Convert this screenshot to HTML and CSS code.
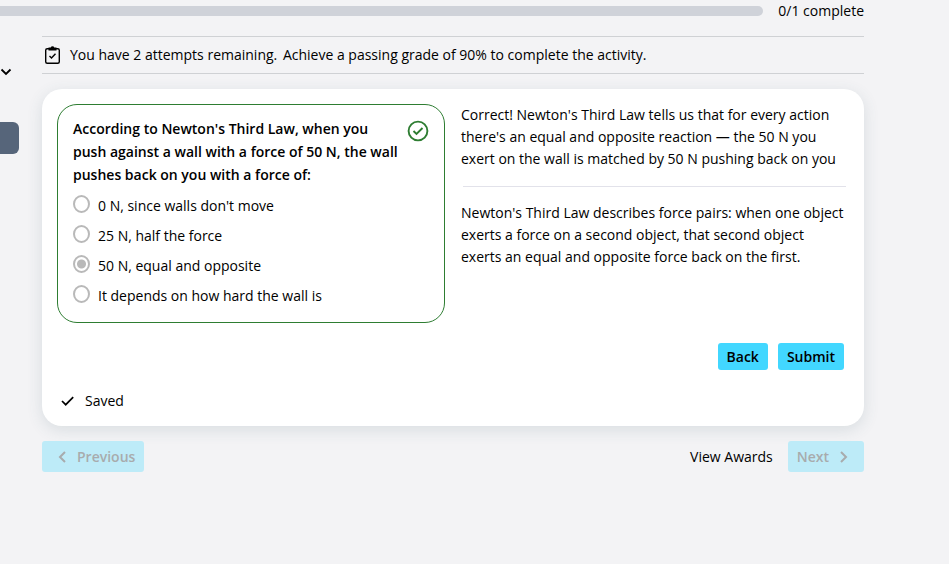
FILE: index.html
```html
<!DOCTYPE html>
<html lang="en">
<head>
    <meta charset="UTF-8">
    <title>Newton's Third Law</title>
    <meta name="viewport" content="width=device-width, initial-scale=1">
    <link rel="stylesheet" href="styles.css">
</head>
<body>

<header class="progress-row">
    <div class="progress-bar" role="progressbar" aria-label="Lesson progress" aria-valuenow="0" aria-valuemin="0" aria-valuemax="1"></div>
    <span>0/1 complete</span>
</header>

<div class="layout">
    <!-- Collapsed lesson menu -->
    <nav class="sidebar" aria-label="Lesson menu">
        <button type="button" class="menu-toggle" aria-label="Toggle menu">
            <svg width="12" height="8" viewBox="0 0 12 8" fill="none" stroke="currentColor" stroke-width="1.8"><path d="M1.5 1.5L6 6l4.500-4.500"/></svg>
        </button>
        <a href="#question" class="menu-item" aria-label="Current activity"></a>
    </nav>

    <main class="content">
        <div class="notice">
            <svg width="17" height="18" viewBox="0 0 17 18" fill="none" stroke="currentColor">
                <rect x="1.7" y="2.7" width="13.6" height="14.5" rx="1.5" stroke-width="1.4"/>
                <path d="M4.500 1.500h2.200a1.900 1.900 0 0 1 3.600 0H12.500V4.500H4.500z" fill="currentColor" stroke="none"/>
                <path d="M5.500 10l2 2 4-4.300" stroke-width="1.4"/>
            </svg>
            <p><span class="attempts">You have 2 attempts remaining.</span> Achieve a passing grade of 90% to complete the activity.</p>
        </div>

        <form class="card" id="question">
            <div class="columns">
                <fieldset class="question" aria-labelledby="prompt">
                    <div class="prompt-row">
                        <p class="prompt" id="prompt">According to Newton's Third Law, when you push against a wall with a force of 50 N, the wall pushes back on you with a force of:</p>
                        <svg class="correct-icon" width="22" height="22" viewBox="0 0 22 22" fill="none" stroke="currentColor" stroke-width="1.9"><circle cx="11" cy="11" r="9.4"/><path d="M6.500 11l3 3 6-6"/></svg>
                    </div>
                    <label class="option"><input type="radio" name="answer" disabled> <span>0 N, since walls don't move</span></label>
                    <label class="option"><input type="radio" name="answer" disabled> <span>25 N, half the force</span></label>
                    <label class="option"><input type="radio" name="answer" disabled checked> <span>50 N, equal and opposite</span></label>
                    <label class="option"><input type="radio" name="answer" disabled> <span>It depends on how hard the wall is</span></label>
                </fieldset>

                <div class="feedback">
                    <p>Correct! Newton's Third Law tells us that for every action there's an equal and opposite reaction — the 50 N you exert on the wall is matched by 50 N pushing back on you</p>
                    <hr>
                    <p>Newton's Third Law describes force pairs: when one object exerts a force on a second object, that second object exerts an equal and opposite force back on the first.</p>
                </div>
            </div>

            <div class="actions">
                <button type="button" class="btn">Back</button>
                <button type="button" class="btn">Submit</button>
            </div>

            <div class="saved">
                <svg width="13" height="10" viewBox="0 0 13 10" fill="none" stroke="currentColor" stroke-width="1.7"><path d="M1 5l3.700 3.700L12.200 1.200"/></svg>
                <span>Saved</span>
            </div>
        </form>

        <footer class="pager">
            <button type="button" class="btn btn-nav btn-prev" disabled>
                <svg width="8" height="12" viewBox="0 0 8 12" fill="none" stroke="currentColor" stroke-width="2"><path d="M7 1L2 6l5 5"/></svg>
                Previous
            </button>
            <a href="#awards" class="awards">View Awards</a>
            <button type="button" class="btn btn-nav btn-next" disabled>
                Next
                <svg width="8" height="12" viewBox="0 0 8 12" fill="none" stroke="currentColor" stroke-width="2"><path d="M1 1l5 5-5 5"/></svg>
            </button>
        </footer>
    </main>
</div>

</body>
</html>
```
FILE: styles.css
```css
* {
    box-sizing: border-box;
    margin: 0;
    padding: 0;
}

body {
    font-family: "Open Sans", sans-serif;
    font-size: 14px;
    line-height: 22px;
    color: #000;
    background: #f3f3f5;
    padding-right: 85px;
}

svg {
    display: block;
    flex: none;
}

/* Progress */
.progress-row {
    display: flex;
    align-items: center;
    gap: 15px;
}

.progress-bar {
    flex: 1;
    height: 10px;
    background: #cfd2d9;
    border-radius: 0 5px 5px 0;
}

.layout {
    display: flex;
    padding-top: 14px;
}

/* Sidebar */
.sidebar {
    width: 42px;
    flex: none;
    padding-top: 32px;
}

.menu-toggle {
    display: block;
    border: none;
    background: none;
    color: #000;
    cursor: pointer;
}

.menu-item {
    display: block;
    width: 19px;
    height: 32px;
    margin-top: 46px;
    background: #56657a;
    border-radius: 0 6px 6px 0;
}

.content {
    flex: 1;
    min-width: 0;
}

/* Attempts notice */
.notice {
    display: flex;
    align-items: center;
    gap: 9px;
    padding: 7px 2px;
    border-top: 1px solid #cfd1d4;
    border-bottom: 1px solid #cfd1d4;
}

.attempts {
    margin-right: 2px;
}

/* Card */
.card {
    margin-top: 15px;
    padding: 15px 15px 14px;
    background: #fff;
    border-radius: 20px;
    box-shadow: 0 4px 16px rgba(60, 90, 105, 0.14);
}

.columns {
    display: grid;
    grid-template-columns: 1fr 1fr;
    gap: 16px;
}

.question {
    min-width: 0;
    padding: 12px 15px;
    border: 1px solid #2e7d32;
    border-radius: 20px;
}

.prompt-row {
    display: flex;
    align-items: flex-start;
    gap: 8px;
    margin-bottom: 4px;
}

.prompt {
    flex: 1;
    font-weight: 600;
    line-height: 23px;
}

.correct-icon {
    margin-top: 3px;
    color: #2e7d32;
}

.option {
    display: flex;
    align-items: flex-start;
    gap: 8px;
    height: 30px;
    padding-top: 5px;
}

.option input {
    appearance: none;
    width: 17px;
    height: 18px;
    border: 2px solid #b9b9b9;
    border-radius: 50%;
    background: #fff;
}

.option input:checked {
    background: radial-gradient(circle, #b9b9b9 4px, #fff 5px);
}

.feedback {
    padding-right: 3px;
}

.feedback hr {
    margin: 16px 0 15px 2px;
    border: none;
    border-top: 1px solid #e2e2ea;
}

/* Buttons */
.actions {
    display: flex;
    justify-content: flex-end;
    gap: 10px;
    padding: 20px 5px;
}

.btn {
    padding: 0 9px;
    height: 27px;
    border: none;
    border-radius: 3px;
    background: #42d7ff;
    color: #000;
    font: inherit;
    font-weight: 600;
    cursor: pointer;
}

.saved {
    display: flex;
    align-items: center;
    gap: 11px;
    padding-left: 4px;
}

/* Bottom navigation */
.pager {
    display: flex;
    align-items: center;
    gap: 15px;
    margin-top: 15px;
}

.btn-nav {
    display: flex;
    align-items: center;
    gap: 11px;
    height: 31px;
    background: #bdebf8;
    color: #a8abad;
    cursor: default;
}

.btn-prev {
    padding-left: 16px;
}

.btn-next {
    padding-right: 16px;
}

.awards {
    margin-left: auto;
    color: #000;
    text-decoration: none;
}
```
